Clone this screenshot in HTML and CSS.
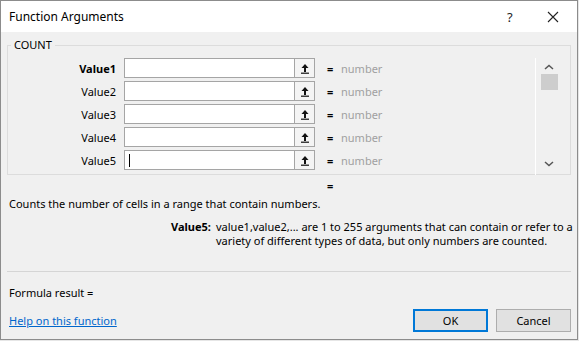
FILE: index.html
```html
<!DOCTYPE html>
<html>
<head>
<meta charset="utf-8">
<link rel="stylesheet" href="styles.css">
</head>
<body>
<div class="dialog">
  <div class="titlebar">
    <span class="title">Function Arguments</span>
    <span class="help">?</span>
    <span class="close"><svg width="12" height="12" viewBox="0 0 12 12"><path d="M1 1L11 11M11 1L1 11" stroke="#222" stroke-width="1.1" fill="none"/></svg></span>
  </div>
  <div class="body">
    <fieldset class="group">
      <legend class="legend">COUNT</legend>
      <div class="args">
        <div class="rows">
          <div class="row">
            <span class="lbl bold">Value1</span>
            <span class="input"></span>
            <span class="ref"><svg width="10" height="11" viewBox="0 0 10 11"><path d="M5 1L1.5 5H4V9H6V5H8.5Z" fill="#111"/><rect x="1" y="9.6" width="8" height="1.2" fill="#111"/></svg></span>
            <span class="eq">=</span>
            <span class="num">number</span>
          </div>
          <div class="row">
            <span class="lbl">Value2</span>
            <span class="input"></span>
            <span class="ref"><svg width="10" height="11" viewBox="0 0 10 11"><path d="M5 1L1.5 5H4V9H6V5H8.5Z" fill="#111"/><rect x="1" y="9.6" width="8" height="1.2" fill="#111"/></svg></span>
            <span class="eq">=</span>
            <span class="num">number</span>
          </div>
          <div class="row">
            <span class="lbl">Value3</span>
            <span class="input"></span>
            <span class="ref"><svg width="10" height="11" viewBox="0 0 10 11"><path d="M5 1L1.5 5H4V9H6V5H8.5Z" fill="#111"/><rect x="1" y="9.6" width="8" height="1.2" fill="#111"/></svg></span>
            <span class="eq">=</span>
            <span class="num">number</span>
          </div>
          <div class="row">
            <span class="lbl">Value4</span>
            <span class="input"></span>
            <span class="ref"><svg width="10" height="11" viewBox="0 0 10 11"><path d="M5 1L1.5 5H4V9H6V5H8.5Z" fill="#111"/><rect x="1" y="9.6" width="8" height="1.2" fill="#111"/></svg></span>
            <span class="eq">=</span>
            <span class="num">number</span>
          </div>
          <div class="row">
            <span class="lbl">Value5</span>
            <span class="input"><span class="caret"></span></span>
            <span class="ref"><svg width="10" height="11" viewBox="0 0 10 11"><path d="M5 1L1.5 5H4V9H6V5H8.5Z" fill="#111"/><rect x="1" y="9.6" width="8" height="1.2" fill="#111"/></svg></span>
            <span class="eq">=</span>
            <span class="num">number</span>
          </div>
        </div>
        <div class="scrollbar">
          <svg class="chev" width="10" height="6" viewBox="0 0 10 6"><path d="M1 5L5 1.5L9 5" stroke="#555" stroke-width="1.5" fill="none"/></svg>
          <div class="thumb"></div>
          <div class="track"></div>
          <svg class="chev" width="10" height="6" viewBox="0 0 10 6"><path d="M1 1L5 4.5L9 1" stroke="#555" stroke-width="1.5" fill="none"/></svg>
        </div>
      </div>
    </fieldset>
    <div class="result-eq">=</div>
    <div class="desc">Counts the number of cells in a range that contain numbers.</div>
    <div class="argdesc">
      <span class="argname">Value5:</span>
      <span class="argtext">value1,value2,... are 1 to 255 arguments that can contain or refer to a variety of different types of data, but only numbers are counted.</span>
    </div>
    <div class="sep"></div>
    <div class="formula">Formula result =</div>
    <div class="footer">
      <a class="helplink">Help on this function</a>
      <div class="buttons">
        <span class="btn ok">OK</span>
        <span class="btn">Cancel</span>
      </div>
    </div>
  </div>
</div>
</body>
</html>
```
FILE: styles.css
```css
* { box-sizing: border-box; }
html, body { margin: 0; padding: 0; }
body {
  width: 579px;
  height: 341px;
  background: #e6e6e6;
  font-family: "Noto Sans", "Open Sans", sans-serif;
  font-size: 11px;
  color: #000;
  overflow: hidden;
}
.dialog {
  width: 578px;
  height: 340px;
  border: 1px solid #8c8c8c;
  background: #f0f0f0;
  display: flex;
  flex-direction: column;
}
.titlebar {
  height: 31px;
  background: #fff;
  display: flex;
  align-items: center;
  padding-left: 8px;
}
.title { font-size: 12px; flex: 1; }
.help { font-size: 13px; width: 14px; margin-right: 26px; color: #222; }
.close { width: 12px; margin-right: 18px; display: flex; }
.body {
  flex: 1;
  padding: 6px 6px 0 8px;
  display: flex;
  flex-direction: column;
}
.group {
  margin: 0;
  padding: 0;
  border: 1px solid #dcdcdc;
  height: 137px;
  min-width: 0;
  margin-left: -2px;
}
.legend {
  padding: 0 3px;
  margin-left: 3px;
  font-size: 11px;
  line-height: 14px;
}
.args {
  display: flex;
  padding-top: 6px;
}
.rows {
  width: 528px;
  display: flex;
  flex-direction: column;
  gap: 3px;
  border-right: 1px solid #fff;
}
.row {
  display: flex;
  align-items: center;
  height: 20px;
}
.lbl {
  width: 116px;
  text-align: right;
  padding-right: 8px;
}
.bold { font-weight: bold; }
.input {
  width: 170px;
  height: 20px;
  background: #fff;
  border: 1px solid #a5a5a5;
  border-right: none;
  display: flex;
  align-items: center;
  padding-left: 4px;
}
.caret { width: 1px; height: 13px; background: #000; }
.ref {
  width: 21px;
  height: 20px;
  border: 1px solid #a5a5a5;
  background: #f4f4f4;
  display: flex;
  align-items: center;
  justify-content: center;
}
.eq { margin-left: 12px; width: 14px; font-weight: bold; }
.num { color: #a0a0a0; }
.scrollbar {
  width: 20px;
  margin-left: 3px;
  margin-top: -1px;
  height: 118px;
  display: flex;
  flex-direction: column;
  align-items: center;
  padding-top: 7px;
}
.chev { display: block; flex: none; }
.thumb {
  width: 17px;
  height: 16px;
  background: #cdcdcd;
  margin-top: 4px;
}
.track { flex: 1; }
.scrollbar .chev:last-child { margin-bottom: 8px; }
.result-eq {
  padding-left: 318px;
  margin-top: 4px;
  height: 14px;
  font-weight: bold;
  line-height: 14px;
}
.desc { margin-top: 3px; line-height: 15px; }
.argdesc {
  display: flex;
  margin-top: 9px;
  line-height: 14px;
  padding-left: 162px;
  margin-right: -6px;
}
.argname { font-weight: bold; width: 45px; flex: none; }
.argtext { width: 362px; flex: none; }
.sep {
  margin-top: 23px;
  height: 1px;
  background: #d5d5d5;
  margin-left: -2px;
}
.formula { margin-top: 13px; line-height: 15px; }
.footer {
  display: flex;
  align-items: center;
  justify-content: space-between;
  margin-top: 9px;
}
.helplink {
  color: #0066cc;
  text-decoration: underline;
}
.buttons { display: flex; gap: 8px; }
.btn {
  width: 75px;
  height: 23px;
  background: #e1e1e1;
  border: 1px solid #adadad;
  display: flex;
  align-items: center;
  justify-content: center;
}
.ok { border: 2px solid #0078d7; }
```
